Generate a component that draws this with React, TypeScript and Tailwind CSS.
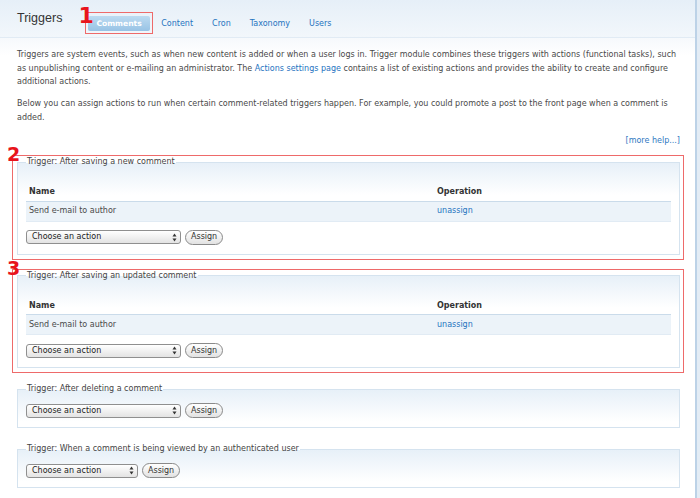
import React from "react";

type Trigger = {
  label: string;
  mark?: string;
  assigned?: string[];
  selectWidth?: string;
};

const triggers: Trigger[] = [
  { label: "Trigger: After saving a new comment", mark: "2", assigned: ["Send e-mail to author"] },
  { label: "Trigger: After saving an updated comment", mark: "3", assigned: ["Send e-mail to author"] },
  { label: "Trigger: After deleting a comment" },
  { label: "Trigger: When a comment is being viewed by an authenticated user", selectWidth: "w-[112px]" },
];

const tabs = ["Content", "Cron", "Taxonomy", "Users"];

function ActionPicker({ width = "w-[155px]" }: { width?: string }) {
  return (
    <div className="flex items-center gap-[4px]">
      <div
        className={`${width} flex h-[14px] items-center justify-between rounded-[3px] border border-[#8f8f8f] bg-[linear-gradient(to_bottom,#ffffff,#e3e3e3)] pl-[5px] pr-[3px] text-[#222]`}
      >
        <span>Choose an action</span>
        <svg width="5" height="9" viewBox="0 0 5 9" className="fill-[#333]">
          <path d="M2.5 0.5 L4.5 3.5 L0.5 3.5 Z" />
          <path d="M2.5 8.5 L4.5 5.5 L0.5 5.5 Z" />
        </svg>
      </div>
      <button className="flex h-[15px] items-center rounded-full border border-[#8a8a8a] bg-[linear-gradient(to_bottom,#ffffff,#e2e2e2)] px-[5px] text-[#333]">
        Assign
      </button>
    </div>
  );
}

function TriggerBox({ t }: { t: Trigger }) {
  return (
    <div className="relative mb-[16px]">
      {t.mark && (
        <>
          <span className="pointer-events-none absolute -top-[2px] -left-[5px] -right-[4px] -bottom-[5px] border border-[#ee6a6a]" />
          <span className="absolute -top-[10px] -left-[10px] text-[19px] font-bold leading-[14px] text-[#e8141c]">
            {t.mark}
          </span>
        </>
      )}
      <fieldset className="border border-[#d5e3ef] bg-[linear-gradient(to_bottom,#e7f0f8,#ffffff_32px)] px-[8px] pb-[9px]">
        <legend className="px-[1px] leading-[10px] text-[#444]">{t.label}</legend>
        {t.assigned ? (
          <>
            <table className="mt-[16px] w-full border-collapse">
              <thead>
                <tr className="border-b border-[#cadbea]">
                  <th className="h-[18px] w-[408px] px-[3px] text-left font-bold text-[#333]">Name</th>
                  <th className="h-[18px] px-[3px] text-left font-bold text-[#333]">Operation</th>
                </tr>
              </thead>
              <tbody>
                {t.assigned.map((a) => (
                  <tr key={a} className="border-b border-[#e1ebf4] bg-[#ecf3f9]">
                    <td className="h-[20px] px-[3px]">{a}</td>
                    <td className="h-[20px] px-[3px]">
                      <a className="text-[#2573bf]">unassign</a>
                    </td>
                  </tr>
                ))}
              </tbody>
            </table>
            <div className="mt-[8px]">
              <ActionPicker width={t.selectWidth} />
            </div>
          </>
        ) : (
          <div className="mt-[9px]">
            <ActionPicker width={t.selectWidth} />
          </div>
        )}
      </fieldset>
    </div>
  );
}

export default function App() {
  return (
    <div className="flex h-[498px] w-[700px] overflow-hidden bg-white font-['DejaVu_Sans','Verdana',sans-serif] text-[8px] text-[#494949]">
      <div className="flex min-w-0 flex-1 flex-col">
        {/* header with tabs */}
        <div className="flex h-[38px] shrink-0 items-start border-b border-[#e1ebf4] bg-[linear-gradient(to_bottom,#e6eff8,#f2f7fb)] pl-[17px]">
          <h1 className="mt-[11px] font-['Liberation_Sans','Arial',sans-serif] text-[12.5px] leading-[15px] text-[#333]">
            Triggers
          </h1>
          <nav className="ml-[26px] mt-[16px] flex items-center">
            <div className="relative mr-[2px]">
              <span className="pointer-events-none absolute -top-[4px] -left-[3px] -right-[3px] -bottom-[3px] border border-[#ee6a6a]" />
              <span className="absolute -top-[8px] -left-[10px] text-[22px] font-bold leading-[16px] text-[#e8141c]">1</span>
              <a className="flex h-[15px] items-center rounded-[2px] bg-[linear-gradient(to_bottom,#bddbf1,#98c3e5)] px-[8px] text-[7.6px] font-bold text-white">
                Comments
              </a>
            </div>
            {tabs.map((tab) => (
              <a key={tab} className="flex h-[15px] items-center px-[9.5px] text-[#2573bf]">
                {tab}
              </a>
            ))}
          </nav>
        </div>

        {/* body */}
        <div className="flex-1 bg-[linear-gradient(to_bottom,#f6f9fc,#ffffff_18px)] pl-[17px] pr-[15px] pt-[10px] leading-[13.5px]">
          <p className="mb-[8.5px]">
            Triggers are system events, such as when new content is added or when a user logs in. Trigger module
            combines these triggers with actions (functional tasks), such as unpublishing content or e-mailing an
            administrator. The <a className="text-[#2573bf]">Actions settings page</a> contains a list of existing
            actions and provides the ability to create and configure additional actions.
          </p>
          <p>
            Below you can assign actions to run when certain comment-related triggers happen. For example, you could
            promote a post to the front page when a comment is added.
          </p>
          <div className="mt-[9.5px] mb-[10px] text-right">
            <a className="text-[#2f78c2]">[more help...]</a>
          </div>
          {triggers.map((t) => (
            <TriggerBox key={t.label} t={t} />
          ))}
        </div>
      </div>
      <div className="w-[5px] shrink-0 border-l-2 border-[#bcd2e7] bg-[#e3ecf5]" />
    </div>
  );
}
